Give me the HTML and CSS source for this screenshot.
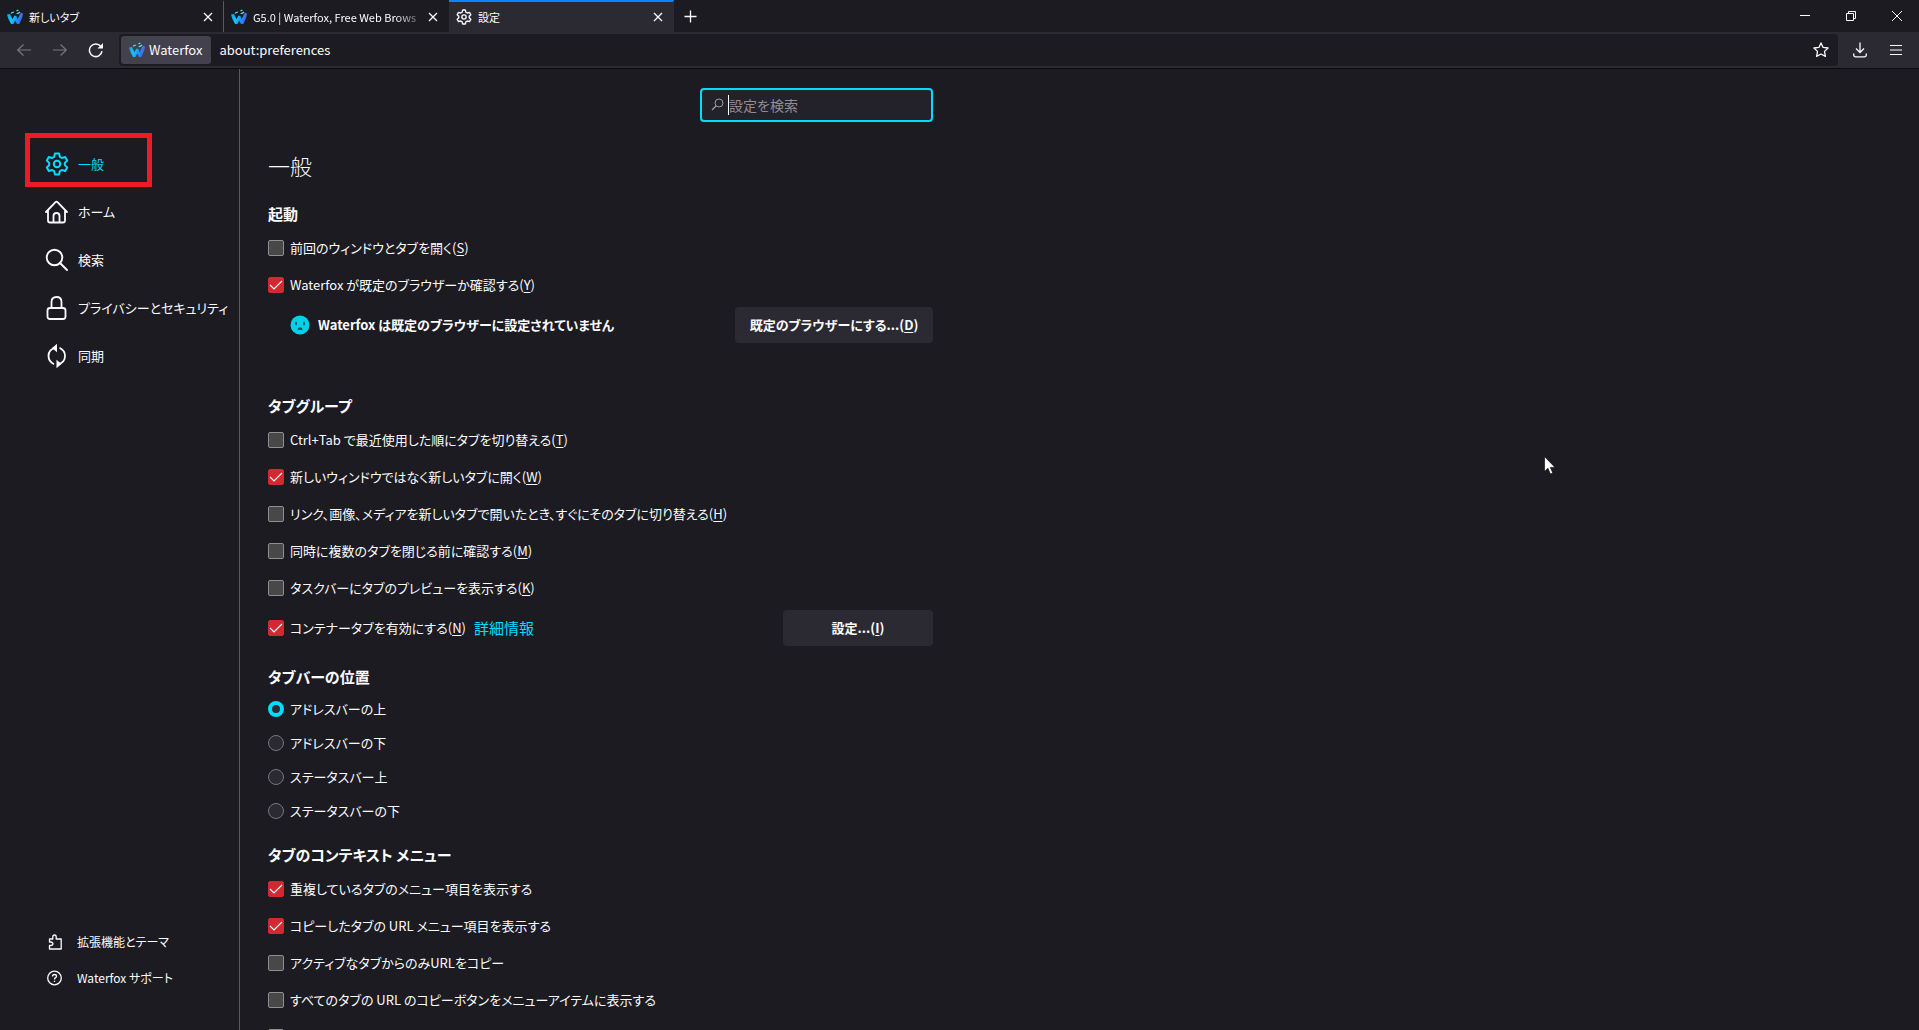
FILE: index.html
```html
<!DOCTYPE html>
<html lang="ja">
<head>
<meta charset="utf-8">
<title>設定</title>
<link rel="stylesheet" href="styles.css">
</head>
<body>
<svg class="defs" aria-hidden="true">
  <defs>
    <linearGradient id="wf" x1="0" y1="0" x2="1" y2="0.2"><stop offset="0" stop-color="#1a9fd8"/><stop offset="0.4" stop-color="#10c4ff"/><stop offset="0.7" stop-color="#1b94ff"/><stop offset="1" stop-color="#4a63e8"/></linearGradient>
  </defs>
  <symbol id="logo" viewBox="0 0 16 16">
    <path fill="url(#wf)" d="M0 5.500l3-.6 2.500 5.300L7.200 6.800h2l1.600 3.400L13.200 4.600l2-.8.8 1.200-.8 3.600L12.300 15h-2.300L8.200 11.600 6.400 15h-2.300L1.400 10z"/>
    <path fill="#5fe3ea" d="M3.500 4Q5 2.400 7.300 2.400L7 3.600Q5.600 3.800 4.600 4.800zM9.300 1.200l1.900-.6.300 1.300-1.900.4zM9.500 4.200Q11.400 4 12.600 2.600l.8.900Q12 5.200 9.800 5.300z"/>
  </symbol>
  <symbol id="gear" viewBox="0 0 24 24">
    <path fill="none" stroke="currentColor" stroke-width="2" stroke-linejoin="round" d="M10 1.500h4l.9 3.400 1.900 1.100 3.400-1 2 3.500-2.400 2.400v2.200l2.400 2.400-2 3.500-3.400-1-1.900 1.100-.9 3.400h-4l-.9-3.400L7.200 18l-3.400 1-2-3.500 2.400-2.400v-2.200L1.800 8.500l2-3.500 3.400 1 1.900-1.100z"/>
    <circle cx="12" cy="12" r="3.200" fill="none" stroke="currentColor" stroke-width="2"/>
  </symbol>
  <symbol id="close" viewBox="0 0 16 16"><path fill="none" stroke="currentColor" stroke-width="1.300" d="M4 4l8 8M12 4l-8 8"/></symbol>
</svg>

<header class="tabs">
  <div class="tab"><svg class="i16"><use href="#logo"/></svg><span class="tab-title">新しいタブ</span><button class="tab-close" aria-label="閉じる"><svg class="i16"><use href="#close"/></svg></button></div>
  <div class="tab"><svg class="i16"><use href="#logo"/></svg><span class="tab-title fade">G5.0 | Waterfox, Free Web Brows</span><button class="tab-close" aria-label="閉じる"><svg class="i16"><use href="#close"/></svg></button></div>
  <div class="tab active"><svg class="i16"><use href="#gear"/></svg><span class="tab-title">設定</span><button class="tab-close" aria-label="閉じる"><svg class="i16"><use href="#close"/></svg></button></div>
  <button class="new-tab" aria-label="新しいタブ"><svg class="i16" viewBox="0 0 16 16"><path stroke="currentColor" stroke-width="1.300" d="M7.500 2.500v12M1.500 8.500h12"/></svg></button>
  <div class="window-controls">
    <button aria-label="最小化"><svg class="i16" viewBox="0 0 16 16"><path stroke="currentColor" d="M4 7.500h10"/></svg></button>
    <button aria-label="元に戻す"><svg class="i16" viewBox="0 0 16 16"><path fill="none" stroke="currentColor" d="M4.500 5.500h7v7h-7zM6.500 5.500v-2h7v7h-2"/></svg></button>
    <button aria-label="ウィンドウを閉じる"><svg class="i16" viewBox="0 0 16 16"><path fill="none" stroke="currentColor" d="M4 3l10 10M14 3 4 13"/></svg></button>
  </div>
</header>

<nav class="toolbar">
  <button class="tool dim" aria-label="戻る"><svg class="i16" viewBox="0 0 16 16"><path fill="none" stroke="currentColor" stroke-width="1.200" d="M15 8H1.500M7.500 2.500 1.700 8l5.800 5.500"/></svg></button>
  <button class="tool dim" aria-label="進む"><svg class="i16" viewBox="0 0 16 16"><path fill="none" stroke="currentColor" stroke-width="1.200" d="M1 8h13.500M8.500 2.500 14.300 8l-5.800 5.500"/></svg></button>
  <button class="tool" aria-label="再読み込み"><svg class="i16" viewBox="0 0 16 16"><path fill="none" stroke="currentColor" stroke-width="1.500" d="M14 9.200A6.300 6.300 0 1 1 12.800 4.500"/><path fill="currentColor" d="M15 1v5.500H9.500z"/></svg></button>
  <div class="urlbar">
    <button class="identity"><svg class="i16"><use href="#logo"/></svg>Waterfox</button>
    <input class="url" type="text" value="about:preferences" aria-label="アドレス">
    <button class="star" aria-label="ブックマーク"><svg class="i16" viewBox="0 0 16 16"><path fill="none" stroke="currentColor" stroke-width="1.300" stroke-linejoin="round" d="M8 .9l2.100 4.500 5 .6-3.600 3.400.9 5L8 12l-4.400 2.400.9-5L.9 6l5-.6z"/></svg></button>
  </div>
  <button class="tool" aria-label="ダウンロード"><svg class="i16" viewBox="0 0 16 16"><path fill="none" stroke="currentColor" stroke-width="1.300" d="M8 .5v10M4 6.500l4 4 4-4M1.700 11.500v1.500q0 1.800 1.800 1.800h9q1.800 0 1.800-1.800v-1.500"/></svg></button>
  <button class="tool" aria-label="メニュー"><svg class="i16" viewBox="0 0 16 16"><path stroke="currentColor" stroke-width="1.200" d="M2 3.500h12M2 8h12M2 12.500h12"/></svg></button>
</nav>

<div class="page">
  <aside class="sidebar">
    <ul class="categories">
      <li><a href="#general" class="category selected"><svg class="i24"><use href="#gear"/></svg>一般</a></li>
      <li><a href="#home" class="category"><svg class="i24" viewBox="0 0 24 24"><path fill="none" stroke="currentColor" stroke-width="1.800" stroke-linejoin="round" stroke-linecap="round" d="M1 12 10.500 2.200q1-1 2 0L22 12M3 10v10.500q0 2 2 2h13q2 0 2-2V10M8.500 22v-6q0-3 3-3t3 3v6"/></svg>ホーム</a></li>
      <li><a href="#search" class="category"><svg class="i24" viewBox="0 0 24 24"><circle cx="9.500" cy="9.500" r="7.800" fill="none" stroke="currentColor" stroke-width="1.900"/><path stroke="currentColor" stroke-width="1.900" stroke-linecap="round" d="M15 15l7 7"/></svg>検索</a></li>
      <li><a href="#privacy" class="category"><svg class="i24" viewBox="0 0 24 24"><path fill="none" stroke="currentColor" stroke-width="1.800" d="M6.500 12V6q0-5 5-5t5 5v6M5 12h13q2.500 0 2.500 2.500v6q0 2.500-2.500 2.500H5q-2.500 0-2.500-2.500v-6Q2.500 12 5 12z"/></svg>プライバシーとセキュリティ</a></li>
      <li><a href="#sync" class="category"><svg class="i24" viewBox="0 0 24 24"><path fill="none" stroke="currentColor" stroke-width="1.800" d="M9 20.200Q3.500 17.500 3.500 12q0-7 7.500-8.200M14.500 3.800Q20 6.500 20 12q0 7-7.500 8.200"/><path fill="currentColor" d="M7 4l5-4.200v8.400zM16.500 20l-5-4.200v8.400z"/></svg>同期</a></li>
    </ul>
    <ul class="links">
      <li><a href="#addons" class="side-link"><svg class="i16" viewBox="0 0 16 16"><path fill="none" stroke="currentColor" stroke-width="1.300" stroke-linejoin="round" d="M2.500 5h3.300V3q0-2 1.700-2t1.700 2v2h5v10H2.500v-3.500H4q2-.2 2-1.700T4 8H2.500z"/></svg>拡張機能とテーマ</a></li>
      <li><a href="#support" class="side-link"><svg class="i16" viewBox="0 0 16 16"><circle cx="7.500" cy="8" r="6.800" fill="none" stroke="currentColor" stroke-width="1.300"/><path fill="none" stroke="currentColor" stroke-width="1.300" d="M5.500 6.500q0-2 2-2t2 1.800Q9.500 7.300 8.300 7.800 7.500 8.200 7.500 9.500M7.500 10.700v1.300"/></svg>Waterfox サポート</a></li>
    </ul>
  </aside>

  <main class="content">
    <div class="column">
      <div class="search-row">
        <label class="search"><svg class="i16" viewBox="0 0 16 16"><circle cx="9" cy="6" r="4" fill="none" stroke="currentColor"/><path stroke="currentColor" stroke-width="1.200" d="M6 9l-4 4"/></svg><span class="caret"></span><input type="search" placeholder="設定を検索" aria-label="設定を検索"></label>
      </div>
      <h1>一般</h1>

      <section class="startup">
        <h2>起動</h2>
        <label class="row"><input type="checkbox"><span>前回のウィンドウとタブを開く(<u>S</u>)</span></label>
        <label class="row"><input type="checkbox" checked><span>Waterfox が既定のブラウザーか確認する(<u>Y</u>)</span></label>
        <div class="default-row">
          <svg class="face" viewBox="0 0 20 20"><circle cx="10" cy="10" r="9.500" fill="#00d2ea"/><ellipse cx="6" cy="8.500" rx="1" ry="2" fill="#1c5360"/><ellipse cx="14" cy="8.500" rx="1" ry="2" fill="#1c5360"/><path fill="#1c5360" d="M7.500 15.300q0-3 2.500-3t2.500 3q-2.500-1.300-5 0z"/></svg>
          <strong>Waterfox は既定のブラウザーに設定されていません</strong>
          <button class="btn wide">既定のブラウザーにする...(<u>D</u>)</button>
        </div>
      </section>

      <section class="group">
        <h2>タブグループ</h2>
        <label class="row"><input type="checkbox"><span>Ctrl+Tab で最近使用した順にタブを切り替える(<u>T</u>)</span></label>
        <label class="row"><input type="checkbox" checked><span>新しいウィンドウではなく新しいタブに開く(<u>W</u>)</span></label>
        <label class="row"><input type="checkbox"><span>リンク、画像、メディアを新しいタブで開いたとき、すぐにそのタブに切り替える(<u>H</u>)</span></label>
        <label class="row"><input type="checkbox"><span>同時に複数のタブを閉じる前に確認する(<u>M</u>)</span></label>
        <label class="row"><input type="checkbox"><span>タスクバーにタブのプレビューを表示する(<u>K</u>)</span></label>
        <div class="container-row">
          <label class="row"><input type="checkbox" checked><span>コンテナータブを有効にする(<u>N</u>)</span></label>
          <a href="#containers" class="more">詳細情報</a>
          <button class="btn">設定...(<u>I</u>)</button>
        </div>
      </section>

      <section class="group">
        <h2>タブバーの位置</h2>
        <label class="row short"><input type="radio" name="pos" checked><span>アドレスバーの上</span></label>
        <label class="row short"><input type="radio" name="pos"><span>アドレスバーの下</span></label>
        <label class="row short"><input type="radio" name="pos"><span>ステータスバー上</span></label>
        <label class="row short"><input type="radio" name="pos"><span>ステータスバーの下</span></label>
      </section>

      <section class="group">
        <h2>タブのコンテキスト メニュー</h2>
        <label class="row"><input type="checkbox" checked><span>重複しているタブのメニュー項目を表示する</span></label>
        <label class="row"><input type="checkbox" checked><span>コピーしたタブの URL メニュー項目を表示する</span></label>
        <label class="row"><input type="checkbox"><span>アクティブなタブからのみURLをコピー</span></label>
        <label class="row"><input type="checkbox"><span>すべてのタブの URL のコピーボタンをメニューアイテムに表示する</span></label>
        <label class="row"><input type="checkbox" aria-label="その他の項目"></label>
      </section>
    </div>
  </main>
</div>
<svg class="pointer" viewBox="0 0 12 19"><path fill="#fff" stroke="#000" stroke-width=".6" d="M.5.500v15l3.400-3.300 2.500 5.800 2.400-1-2.500-5.600h4.700z"/></svg>
</body>
</html>
```

FILE: styles.css
```css
*, ::before, ::after { box-sizing: border-box; }
body {
  margin: 0;
  height: 100vh;
  overflow: hidden;
  display: flex;
  flex-direction: column;
  background: #1c1b22;
  color: #fbfbfe;
  font-family: "Noto Sans CJK JP", "Noto Sans", sans-serif;
  font-size: 13px;
  line-height: 24px;
  font-feature-settings: "palt", "kern";
}
button { margin: 0; padding: 0; border: 0; background: none; color: inherit; font: inherit; font-feature-settings: inherit; }
input { font: inherit; color: inherit; font-feature-settings: inherit; }
a { color: inherit; text-decoration: none; }
ul { margin: 0; padding: 0; list-style: none; }
u { text-decoration: underline; text-underline-offset: 2px; }
svg { flex: none; display: block; }
.defs { position: absolute; width: 0; height: 0; }
.i16 { width: 16px; height: 16px; }
.i24 { width: 24px; height: 24px; }

.tabs { flex: none; display: flex; height: 32px; font-size: 11px; }
.tab {
  width: 225px;
  display: flex;
  align-items: center;
  gap: 6px;
  padding: 0 7px;
  border-top: 2px solid transparent;
  border-right: 1px solid transparent;
}
.tab:first-child { width: 224px; border-right-color: #5b5a61; }
.tab.active { background: #2b2a33; border-top-color: #0a84ff; }
.tab-title { flex: 1; min-width: 0; white-space: nowrap; }
.fade { mask-image: linear-gradient(to right, #000 85%, transparent 105%); }
.new-tab { width: 34px; display: grid; place-items: center; }
.window-controls { margin-left: auto; display: flex; }
.window-controls button { width: 46px; display: grid; place-items: center; }

.toolbar {
  flex: none;
  height: 37px;
  display: flex;
  align-items: center;
  padding: 0 5px 0 6px;
  background: #2b2a33;
  border-bottom: 1px solid #0c0c0d;
}
.tool { width: 36px; height: 32px; display: grid; place-items: center; }
.dim { color: #77767d; }
.urlbar {
  flex: 1;
  height: 32px;
  display: flex;
  align-items: center;
  margin: 0 4px 0 5px;
  padding: 0 9px 0 2px;
  border-radius: 4px;
  background: #1c1b22;
}
.identity { height: 28px; display: flex; align-items: center; gap: 4px; padding: 0 9px 0 8px; border-radius: 3px; background: #42414d; }
.url { flex: 1; border: 0; outline: 0; padding: 0 8px; background: none; }

.page { flex: 1; min-height: 0; display: flex; }
.sidebar {
  flex: none;
  width: 240px;
  display: flex;
  flex-direction: column;
  justify-content: space-between;
  padding: 71px 0 34px;
  border-right: 1px solid #5b5a61;
}
.category { position: relative; display: flex; align-items: center; gap: 9px; height: 48px; padding-left: 45px; white-space: nowrap; }
.category.selected { color: #00ddff; }
.category.selected::after { content: ""; position: absolute; left: 25px; top: -7px; width: 127px; height: 54px; border: 5px solid #ed1c24; }
.side-link { display: flex; align-items: center; gap: 14px; height: 36px; padding-left: 47px; font-size: 12px; }

.content { flex: 1; min-width: 0; overflow: hidden; padding: 19px 28px 0; }
.column { max-width: 665px; }
.search-row { display: flex; justify-content: flex-end; }
.search {
  width: 233px;
  height: 34px;
  display: flex;
  align-items: center;
  padding: 0 8px;
  border: 2px solid #00ddff;
  border-radius: 4px;
  background: #23222b;
  color: #9a999f;
  font-size: 14px;
}
.search input { width: 100%; min-width: 0; border: 0; outline: 0; padding: 0; background: none; }
.search input::placeholder { color: #8f8e95; opacity: 1; }
.caret { flex: none; width: 1px; height: 20px; margin-left: 2px; background: #fbfbfe; }
h1 { margin: 28px 0 22px; font-size: 22px; line-height: 30px; font-weight: 300; }
h2 { margin: 0 0 3px; font-size: 15px; line-height: 24px; font-weight: 700; }
.row { display: flex; align-items: center; gap: 6px; height: 37px; white-space: nowrap; }
.row.short { height: 34px; }
.row input {
  appearance: none;
  flex: none;
  width: 16px;
  height: 16px;
  margin: 0;
  border: 1px solid #8f8f8f;
  border-radius: 2px;
  background: #484848;
}
.row input[type="checkbox"]:checked {
  border-color: #d22832;
  background: #d22832 url("data:image/svg+xml,%3Csvg xmlns='http://www.w3.org/2000/svg' viewBox='0 0 14 14'%3E%3Cpath fill='none' stroke='%23fff' stroke-width='1.100' d='M1 7l4 4 8-8'/%3E%3C/svg%3E");
}
.row input[type="radio"] { border-color: #77767d; border-radius: 50%; background: #2b2a33; }
.row input[type="radio"]:checked { border: 4px solid #00ddff; }
.default-row { display: flex; align-items: center; height: 43px; padding-left: 22px; }
.face { width: 20px; height: 20px; margin-right: 8px; }
.btn { width: 150px; height: 36px; margin-left: auto; border-radius: 4px; background: #2b2a33; font-weight: 700; white-space: nowrap; }
.btn.wide { width: 198px; }
.startup { margin-bottom: 48px; }
.group { margin-bottom: 15px; }
.container-row { display: flex; align-items: center; height: 44px; }
.more { margin-left: 8px; color: #00ddff; font-size: 15px; }
.pointer { position: absolute; left: 1544px; top: 456px; width: 12px; height: 19px; }
```
